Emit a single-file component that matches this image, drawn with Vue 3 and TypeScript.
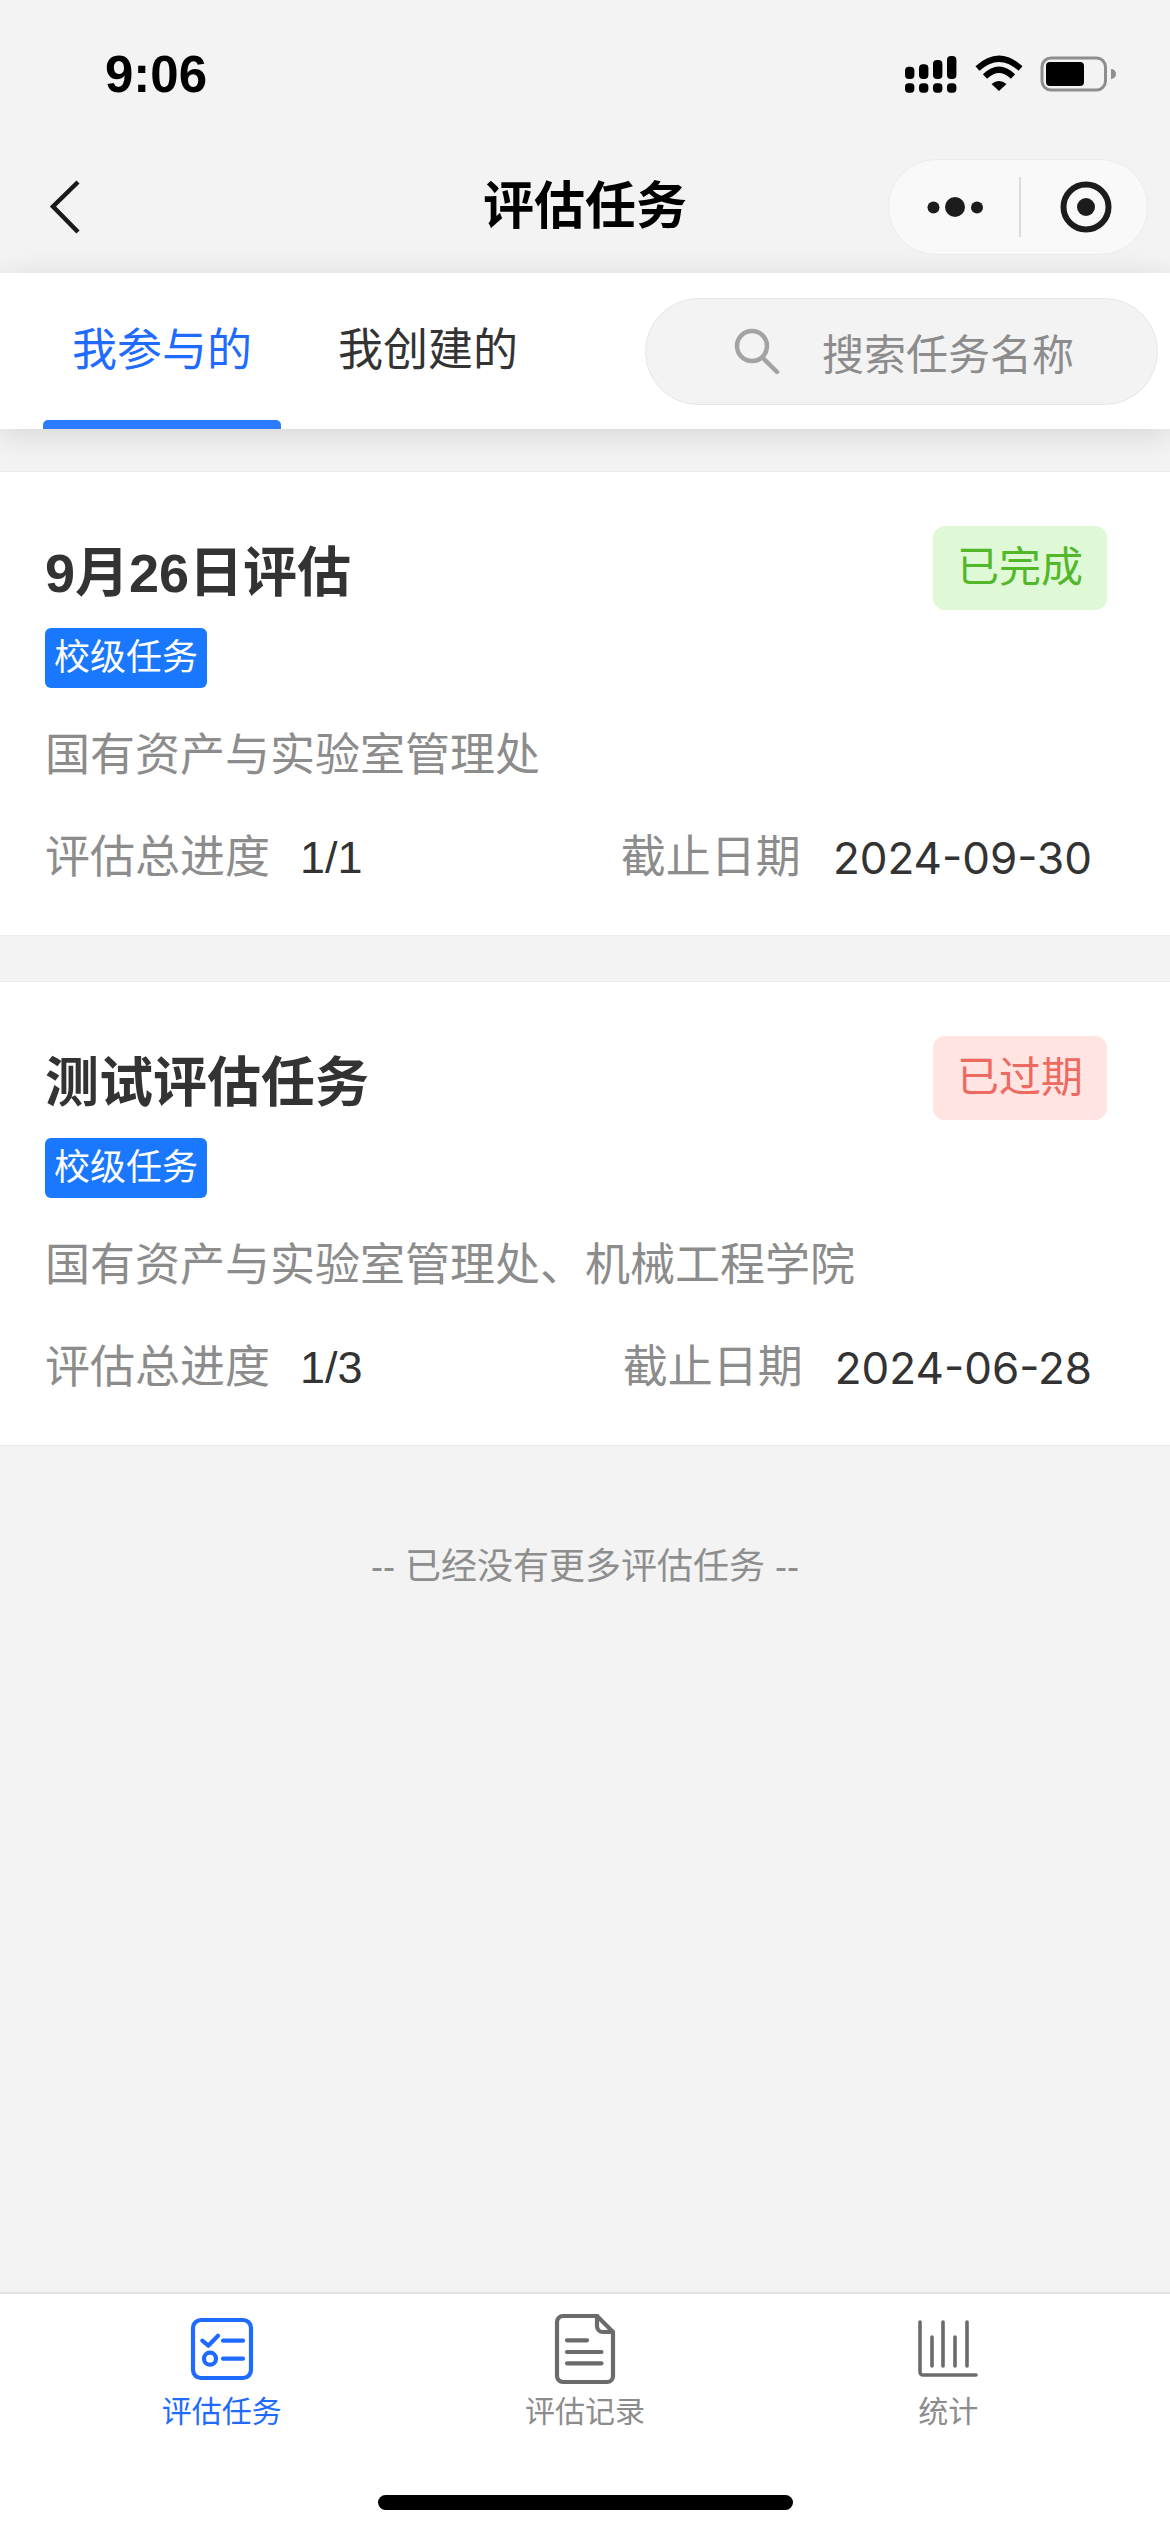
<script setup lang="ts">
import { ref } from 'vue'

interface Task {
  id: number
  title: string
  scope: string
  depts: string
  progress: string
  deadline: string
  status: 'done' | 'expired'
  statusText: string
}

const activeTab = ref(0)
const tabs = ['我参与的', '我创建的']

const tasks: Task[] = [
  {
    id: 1,
    title: '9月26日评估',
    scope: '校级任务',
    depts: '国有资产与实验室管理处',
    progress: '1/1',
    deadline: '2024-09-30',
    status: 'done',
    statusText: '已完成',
  },
  {
    id: 2,
    title: '测试评估任务',
    scope: '校级任务',
    depts: '国有资产与实验室管理处、机械工程学院',
    progress: '1/3',
    deadline: '2024-06-28',
    status: 'expired',
    statusText: '已过期',
  },
]
</script>

<template>
  <div class="page">
    <div class="status-bar">
      <span class="clock">9:06</span>
      <div class="status-icons">
        <svg class="ic-signal" viewBox="0 0 54 37" width="54" height="37" fill="#000">
          <rect x="1" y="10.7" width="9.4" height="12.3" rx="4" />
          <rect x="15" y="8.3" width="9.4" height="14.7" rx="4" />
          <rect x="29" y="4" width="9.4" height="19" rx="4" />
          <rect x="43" y="0" width="9.4" height="23" rx="4" />
          <rect x="1" y="27.3" width="9.4" height="9.4" rx="3.6" />
          <rect x="15" y="27.3" width="9.4" height="9.4" rx="3.6" />
          <rect x="29" y="27.3" width="9.4" height="9.4" rx="3.6" />
          <rect x="43" y="27.3" width="9.4" height="9.4" rx="3.6" />
        </svg>
        <svg class="ic-wifi" viewBox="0 0 48 36" width="48" height="36" fill="none" stroke="#000">
          <path d="M2.5 13.5Q24 -6 45.5 13.5" stroke-width="6" />
          <path d="M10 21.5Q24 8 38 21.5" stroke-width="6" />
          <path d="M16.5 29Q24 23 31.5 29L24 36Z" fill="#000" stroke="none" />
        </svg>
        <svg class="ic-battery" viewBox="0 0 76 36" width="76" height="36">
          <rect x="2" y="2" width="63.5" height="32" rx="9" fill="none" stroke="#8e8e8e" stroke-width="3" />
          <rect x="6" y="6" width="38" height="24" rx="4" fill="#000" />
          <path d="M71 13a5 5 0 0 1 0 10Z" fill="#8e8e8e" />
        </svg>
      </div>
    </div>

    <div class="nav-bar">
      <svg class="nav-back" viewBox="0 0 32 56" width="32" height="56" fill="none" stroke="#1a1a1a" stroke-width="4.5">
        <path d="M29 3L4 27.500L29 53" />
      </svg>
      <span class="nav-title">评估任务</span>
      <div class="capsule">
        <svg viewBox="0 0 64 24" width="64" height="24" fill="#1c1c1c">
          <circle cx="6.500" cy="12.500" r="6" />
          <circle cx="28" cy="12" r="10" />
          <circle cx="50" cy="12.500" r="6" />
        </svg>
        <i class="capsule-line"></i>
        <svg viewBox="0 0 52 52" width="52" height="52">
          <circle cx="26" cy="26" r="22.500" fill="none" stroke="#1c1c1c" stroke-width="6" />
          <circle cx="26" cy="26" r="9" fill="#1c1c1c" />
        </svg>
      </div>
    </div>

    <div class="tabs-row">
      <div
        v-for="(t, i) in tabs"
        :key="t"
        class="tab"
        :class="{ 'tab-on': activeTab === i }"
        @click="activeTab = i"
      >
        {{ t }}
      </div>
      <div class="search">
        <svg viewBox="0 0 46 46" width="46" height="46" fill="none" stroke="#a3a3a3" stroke-width="4.500" stroke-linecap="round">
          <circle cx="18" cy="18" r="15" />
          <path d="M29 30L43 44" />
        </svg>
        <span>搜索任务名称</span>
      </div>
    </div>

    <div class="list">
      <div v-for="task in tasks" :key="task.id" class="card">
        <div class="card-head">
          <span class="card-title">{{ task.title }}</span>
          <span class="badge" :class="`badge-${task.status}`">{{ task.statusText }}</span>
        </div>
        <div class="scope">{{ task.scope }}</div>
        <div class="depts">{{ task.depts }}</div>
        <div class="meta">
          <span class="meta-label">评估总进度</span>
          <span class="meta-value progress">{{ task.progress }}</span>
          <span class="meta-label deadline-label">截止日期</span>
          <span class="meta-value date">{{ task.deadline }}</span>
        </div>
      </div>
      <p class="list-end">-- 已经没有更多评估任务 --</p>
    </div>

    <div class="tabbar">
      <div class="tabbar-item tabbar-on">
        <svg viewBox="0 0 64 74" width="64" height="74" fill="none" stroke="#1f6bff" stroke-width="4.200" stroke-linecap="round" stroke-linejoin="round">
          <rect x="3" y="8" width="58" height="58" rx="8" />
          <path d="M12.300 28.700L18.300 33.700L28 23.700" />
          <path d="M33 28.700H53M33 46.700H53" />
          <circle cx="20" cy="46.700" r="6" />
        </svg>
        <span>评估任务</span>
      </div>
      <div class="tabbar-item">
        <svg viewBox="0 0 64 74" width="64" height="74" fill="none" stroke="#6b6b6b" stroke-width="4.200" stroke-linecap="round" stroke-linejoin="round">
          <path d="M10 4H44L60 20V64a6 6 0 0 1-6 6H10a6 6 0 0 1-6-6V10a6 6 0 0 1 6-6Z" />
          <path d="M44 4V14a6 6 0 0 0 6 6H60" />
          <path d="M14 28.300H34M14 40H48.500M14 51.300H48.500" />
        </svg>
        <span>评估记录</span>
      </div>
      <div class="tabbar-item">
        <svg viewBox="0 0 64 74" width="64" height="74" fill="none" stroke="#6b6b6b" stroke-width="3.600" stroke-linecap="round" stroke-linejoin="round">
          <path d="M4 10V60a3 3 0 0 0 3 3H60" />
          <path d="M16 25V54M27 10V54M39 25V54M51 10V54" />
        </svg>
        <span>统计</span>
      </div>
    </div>

    <div class="home-bar"><i></i></div>
  </div>
</template>

<style>
body {
  background: #f3f3f3;
}
</style>

<style scoped>
.page {
  display: flex;
  flex-direction: column;
  height: 2532px;
  overflow: hidden;
  background: #f3f3f3;
  font-family: "Liberation Sans", "Noto Sans CJK SC", sans-serif;
  color: #333;
}

.status-bar {
  display: flex;
  align-items: center;
  justify-content: space-between;
  height: 148px;
  padding: 0 54px 0 105px;
}
.clock {
  font-size: 51px;
  font-weight: 700;
  color: #000;
}
.status-icons {
  display: flex;
  align-items: center;
  gap: 17px;
}
.ic-wifi { margin-top: -3px; }
.ic-battery { margin-left: 0; }

.nav-bar {
  position: relative;
  display: flex;
  align-items: center;
  justify-content: space-between;
  height: 125px;
  padding: 0 22px 7px 49px;
  box-sizing: border-box;
}
.nav-title {
  position: absolute;
  left: 0;
  right: 0;
  top: 26px;
  text-align: center;
  font-size: 51px;
  line-height: 66px;
  font-weight: 700;
  color: #000;
}
.capsule {
  display: flex;
  align-items: center;
  width: 260px;
  height: 96px;
  box-sizing: border-box;
  padding-left: 38px;
  background: #f9f9f9;
  border: 1.5px solid #ececec;
  border-radius: 48px;
}
.capsule-line {
  width: 2px;
  height: 60px;
  margin: 0 39px 0 28px;
  background: #dcdcdc;
}

.tabs-row {
  position: relative;
  z-index: 1;
  display: flex;
  align-items: center;
  height: 156px;
  padding-left: 43px;
  background: #fff;
  box-shadow: 0 6px 30px rgba(0, 0, 0, 0.12);
}
.tab {
  position: relative;
  width: 238px;
  margin-right: 28px;
  height: 156px;
  line-height: 156px;
  text-align: center;
  font-size: 45px;
  color: #333;
}
.tab-on {
  color: #1f6bff;
}
.tab-on::after {
  content: "";
  position: absolute;
  left: 0;
  right: 0;
  bottom: 0;
  height: 9px;
  border-radius: 5px 5px 0 0;
  background: #2a7bff;
}
.search {
  display: flex;
  align-items: center;
  gap: 42px;
  width: 513px;
  height: 107px;
  margin-left: 70px;
  padding-left: 88px;
  box-sizing: border-box;
  background: #f3f3f3;
  border: 1.5px solid #e6e6e6;
  border-radius: 54px;
  font-size: 42px;
  color: #8c8c8c;
}

.list {
  flex: 1;
  padding-top: 42px;
}
.card {
  height: 465px;
  box-sizing: border-box;
  margin-bottom: 45px;
  padding: 54px 63px 0 45px;
  background: #fff;
  border-top: 1.5px solid #ececec;
  border-bottom: 1.5px solid #ececec;
}
.card-head {
  display: flex;
  align-items: center;
  justify-content: space-between;
  height: 84px;
}
.card-title {
  font-size: 54px;
  font-weight: 700;
  color: #333;
}
.badge {
  width: 174px;
  height: 84px;
  line-height: 84px;
  text-align: center;
  font-size: 42px;
  border-radius: 12px;
}
.badge-done {
  background: #dff8d6;
  color: #52b82a;
}
.badge-expired {
  background: #ffe4e2;
  color: #ee6a60;
}
.scope {
  width: 162px;
  height: 60px;
  margin-top: 18px;
  line-height: 60px;
  text-align: center;
  font-size: 36px;
  color: #fff;
  background: #1a78ff;
  border-radius: 6px;
}
.depts {
  margin-top: 38px;
  font-size: 45px;
  line-height: 60px;
  color: #8c8c8c;
}
.meta {
  display: flex;
  align-items: center;
  margin-top: 42px;
  font-size: 45px;
  line-height: 60px;
}
.meta-label {
  color: #8c8c8c;
}
.meta-value {
  color: #333;
}
.progress {
  margin-left: 30px;
}
.deadline-label {
  margin-left: auto;
}
.date {
  margin-left: 32px;
  margin-right: 15px;
  font-family: "Inter", "Noto Sans CJK SC", sans-serif;
  font-size: 44px;
}
.list-end {
  margin: 96px 0 0;
  text-align: center;
  font-size: 36px;
  line-height: 50px;
  color: #8e8e8e;
}

.tabbar {
  display: grid;
  grid-template-columns: repeat(3, 1fr);
  height: 148px;
  padding: 0 40px;
  background: #fff;
  border-top: 2px solid #e3e3e3;
}
.tabbar-item {
  display: flex;
  flex-direction: column;
  align-items: center;
  padding-top: 18px;
  font-size: 30px;
  line-height: 40px;
  color: #8c8c8c;
}
.tabbar-item svg {
  margin-bottom: 6px;
}
.tabbar-on {
  color: #1f6bff;
}
.home-bar {
  display: flex;
  justify-content: center;
  height: 90px;
  background: #fff;
}
.home-bar i {
  width: 415px;
  height: 15px;
  margin-top: 53px;
  border-radius: 8px;
  background: #000;
}
</style>
